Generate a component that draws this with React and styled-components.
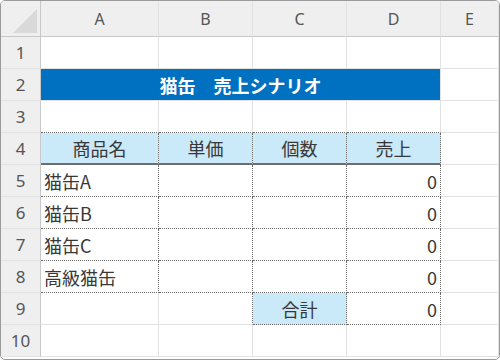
import React from "react";
import styled, { createGlobalStyle, css } from "styled-components";

const Global = createGlobalStyle`
  html, body { margin: 0; padding: 0; background: #ffffff; }
  body { font-family: "Noto Sans CJK JP", "Noto Sans", sans-serif; }
`;

const GRID = "#e2e2e2";
const HEAD_LINE = "#c8c8c8";
const DOT = "1px dotted #6a6a6a";

const Sheet = styled.div`
  width: 500px;
  height: 360px;
  box-sizing: border-box;
  border: 1px solid #9a9a9a;
  border-radius: 5px;
  overflow: hidden;
  background: #fff;
  display: grid;
  grid-template-columns: 40px 118px 94px 94px 94px 1fr;
  grid-template-rows: 36px repeat(10, 32px);
`;

const Corner = styled.div`
  background: #efefef;
  border-right: 1px solid ${HEAD_LINE};
  border-bottom: 1px solid ${HEAD_LINE};
  box-sizing: border-box;
  display: flex;
  align-items: flex-end;
  justify-content: flex-end;
  padding: 0 3px 3px 0;
`;

const ColHead = styled.div`
  background: #efefef;
  border-right: 1px solid ${GRID};
  border-bottom: 1px solid ${HEAD_LINE};
  box-sizing: border-box;
  display: flex;
  align-items: center;
  justify-content: center;
  font-family: "Noto Sans", sans-serif;
  font-size: 16px;
  color: #555;
`;

const RowHead = styled.div`
  background: #efefef;
  border-right: 1px solid ${HEAD_LINE};
  border-bottom: 1px solid ${GRID};
  box-sizing: border-box;
  display: flex;
  align-items: center;
  justify-content: center;
  font-family: "Noto Sans", sans-serif;
  font-size: 17px;
  color: #555;
`;

const Cell = styled.div`
  box-sizing: border-box;
  border-right: 1px solid ${GRID};
  border-bottom: 1px solid ${GRID};
  display: flex;
  align-items: center;
  padding: 0 3px;
  font-size: 18px;
  color: #383838;
  white-space: nowrap;
  justify-content: ${(p) =>
    p.$align === "right" ? "flex-end" : p.$align === "center" ? "center" : "flex-start"};
  ${(p) => p.$fill && css`background: ${p.$fill};`}
  ${(p) => p.$dotRight && css`border-right: ${DOT};`}
  ${(p) => p.$dotBottom && css`border-bottom: ${DOT};`}
  ${(p) => p.$thickBottom && css`border-bottom: 2px solid #6e6e6e;`}
`;

const Title = styled.div`
  grid-column: span 4;
  box-sizing: border-box;
  background: #0070c0;
  border-right: 1px solid ${GRID};
  border-bottom: 1px solid ${GRID};
  color: #fff;
  font-weight: 700;
  font-size: 18px;
  display: flex;
  align-items: center;
  justify-content: center;
  white-space: pre;
`;

const HEADER_FILL = "#cae9f9";
const cols = ["A", "B", "C", "D", "E"];
const items = ["猫缶A", "猫缶B", "猫缶C", "高級猫缶"];

export default function App() {
  const rows = [];

  // row 1
  rows.push(
    <React.Fragment key="r1">
      <RowHead>1</RowHead>
      {cols.map((c) => <Cell key={c} />)}
    </React.Fragment>
  );

  // row 2: merged title band
  rows.push(
    <React.Fragment key="r2">
      <RowHead>2</RowHead>
      <Title>{"猫缶　売上シナリオ"}</Title>
      <Cell />
    </React.Fragment>
  );

  // row 3: top edge of the table
  rows.push(
    <React.Fragment key="r3">
      <RowHead>3</RowHead>
      <Cell $dotBottom />
      <Cell $dotBottom />
      <Cell $dotBottom />
      <Cell $dotBottom />
      <Cell />
    </React.Fragment>
  );

  // row 4: table header
  rows.push(
    <React.Fragment key="r4">
      <RowHead>4</RowHead>
      {["商品名", "単価", "個数", "売上"].map((t) => (
        <Cell key={t} $fill={HEADER_FILL} $align="center" $dotRight $thickBottom>
          {t}
        </Cell>
      ))}
      <Cell />
    </React.Fragment>
  );

  // rows 5-8: items
  items.forEach((name, i) => {
    rows.push(
      <React.Fragment key={name}>
        <RowHead>{5 + i}</RowHead>
        <Cell $dotRight $dotBottom>{name}</Cell>
        <Cell $dotRight $dotBottom />
        <Cell $dotRight $dotBottom />
        <Cell $dotRight $dotBottom $align="right">0</Cell>
        <Cell />
      </React.Fragment>
    );
  });

  // row 9: total
  rows.push(
    <React.Fragment key="r9">
      <RowHead>9</RowHead>
      <Cell />
      <Cell $dotRight />
      <Cell $fill={HEADER_FILL} $align="center" $dotRight $dotBottom>合計</Cell>
      <Cell $dotRight $dotBottom $align="right">0</Cell>
      <Cell />
    </React.Fragment>
  );

  // row 10
  rows.push(
    <React.Fragment key="r10">
      <RowHead>10</RowHead>
      {cols.map((c) => <Cell key={c} />)}
    </React.Fragment>
  );

  return (
    <>
      <Global />
      <Sheet>
        <Corner>
          <svg width="24" height="24" viewBox="0 0 24 24">
            <polygon points="24,0 24,24 0,24" fill="#d9d9d9" />
          </svg>
        </Corner>
        {cols.map((c) => (
          <ColHead key={c}>{c}</ColHead>
        ))}
        {rows}
      </Sheet>
    </>
  );
}
